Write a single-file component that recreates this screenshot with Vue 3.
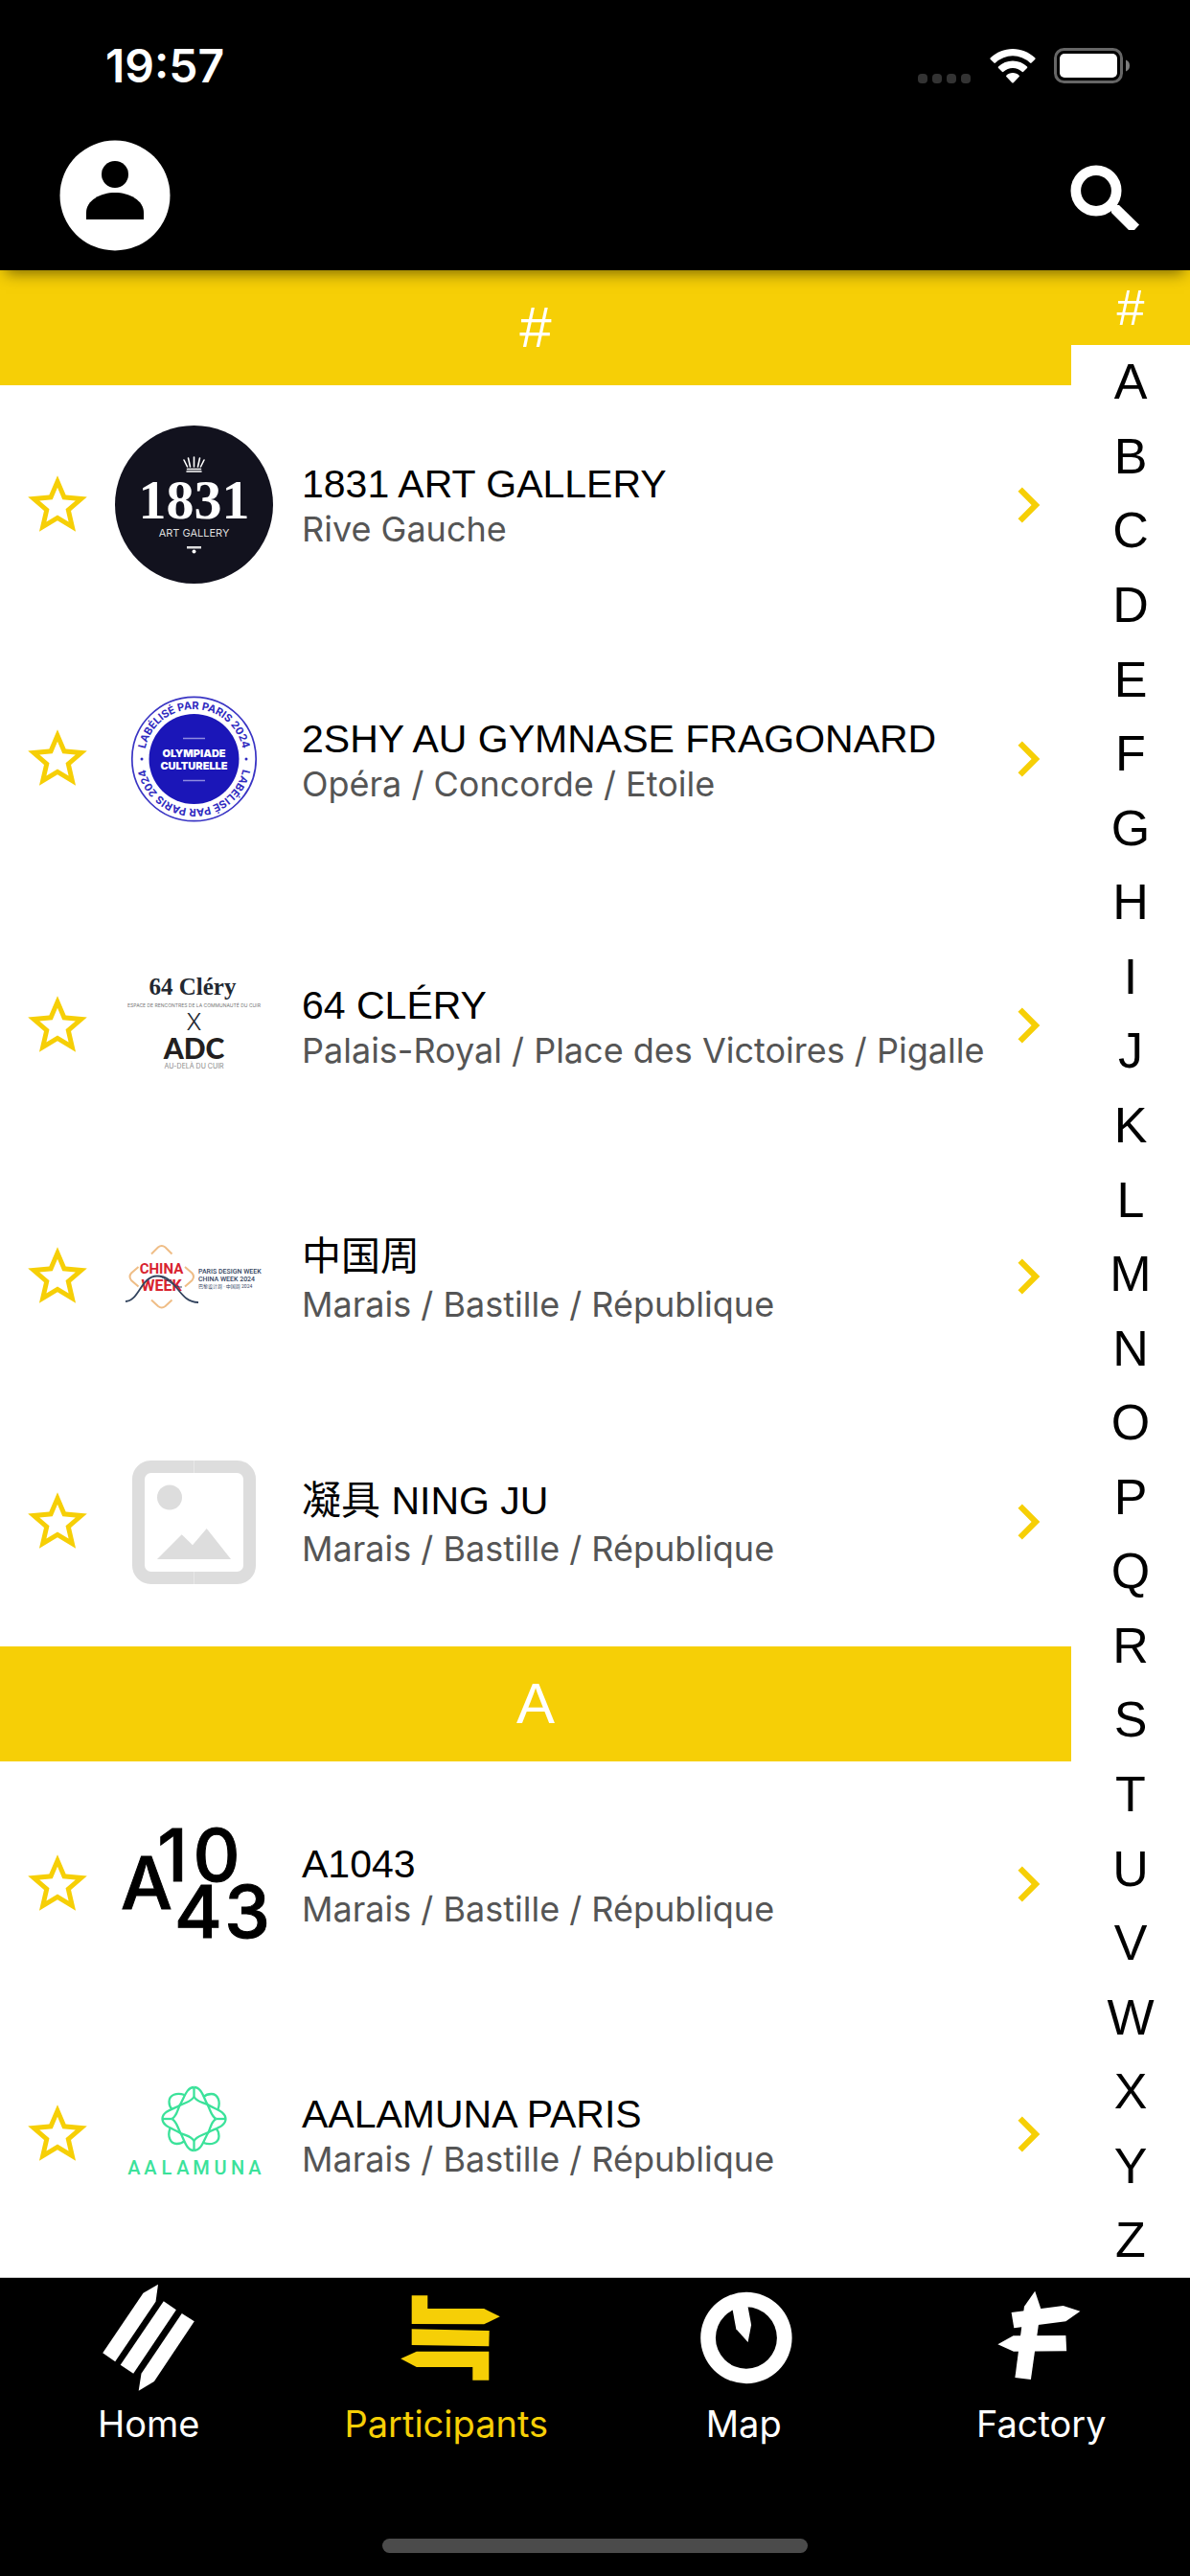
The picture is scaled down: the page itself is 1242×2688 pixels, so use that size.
<template>
  <div class="app">
    <header class="topbar">
      <div class="status">
        <time class="status__time">19:57</time>
        <div class="status__icons">
          <svg class="status__dots" viewBox="0 0 55 10" aria-hidden="true">
            <rect v-for="n in 4" :key="n" :x="(n - 1) * 15" y="0" width="10" height="10" rx="4" fill="#333" />
          </svg>
          <svg class="status__wifi" viewBox="0 0 48 36" aria-hidden="true">
            <path d="M24 0C15 0 7 3.500 .8 9.300Q0 10.200 .8 11L4.400 14.600Q5.200 15.200 6 14.500A26 26 0 0 1 42 14.500Q42.800 15.200 43.600 14.600L47.200 11Q48 10.200 47.200 9.300C41 3.500 33 0 24 0Z" />
            <path d="M24 12.500C18.300 12.500 13 14.700 9 18.500Q8.300 19.300 9 20L12.800 23.800Q13.600 24.500 14.400 23.800A14 14 0 0 1 33.600 23.800Q34.400 24.500 35.200 23.800L39 20Q39.700 19.300 39 18.500C35 14.700 29.700 12.500 24 12.500Z" />
            <path d="M24 25C21.300 25 19 26 17.300 27.700Q16.700 28.400 17.300 29.100L23.200 35.200Q24 36 24.800 35.200L30.700 29.100Q31.300 28.400 30.700 27.700C29 26 26.700 25 24 25Z" />
          </svg>
          <svg class="status__battery" viewBox="0 0 80 37" aria-hidden="true">
            <rect x="1.500" y="1.500" width="69" height="34" rx="9" fill="none" stroke="#666" stroke-width="3" />
            <rect x="6" y="6" width="60" height="25" rx="5" />
            <path d="M75 12.500Q79 14 79 18.500T75 24.500Z" fill="#7c7c7c" />
          </svg>
        </div>
      </div>

      <div class="actions">
        <button class="icon-btn" type="button" aria-label="Profile">
          <svg class="actions__avatar" viewBox="0 0 116 116">
            <circle cx="58" cy="58" r="57.500" fill="#fff" />
            <circle cx="58" cy="36" r="14" fill="#000" />
            <path d="M28 83V76C28 63 43 55 58 55S88 63 88 76V83Z" fill="#000" />
          </svg>
        </button>
        <button class="icon-btn" type="button" aria-label="Search">
          <svg class="actions__search" viewBox="0 0 72 72">
            <circle cx="27" cy="31" r="21.200" fill="none" stroke="#fff" stroke-width="10.600" />
            <path d="M43 54V49L47 46H51L72 66.500 67 72H61Z" fill="#fff" />
          </svg>
        </button>
      </div>
    </header>

    <div class="content">
      <main class="list">
        <section v-for="group in groups" :key="group.letter">
          <h2 class="list__heading">{{ group.letter }}</h2>
          <article v-for="item in group.items" :key="item.name" class="row">
            <button class="icon-btn" type="button" :aria-label="'Favorite ' + item.name">
              <svg class="row__icon" viewBox="0 0 24 24">
                <path d="M22 9.240l-7.190-.62L12 2 9.190 8.630 2 9.240l5.460 4.730L5.820 21 12 17.270 18.180 21l-1.630-7.030L22 9.240zM12 15.400l-3.760 2.270 1-4.280-3.320-2.880 4.380-.38L12 6.100l1.710 4.040 4.380.38-3.320 2.880 1 4.280L12 15.400z" />
              </svg>
            </button>

            <a class="row__link" href="#">
              <!-- 1831 Art Gallery -->
              <svg v-if="item.logo === 'gallery'" class="logo" viewBox="0 0 165 165">
                <circle cx="82.500" cy="82.500" r="82.500" fill="#12121e" />
                <g fill="none" stroke="#fff" stroke-width="1.600" stroke-linecap="round">
                  <path d="M75 48H90M75.500 45.500H89.500M75.500 43L72 36M78.500 43L76.500 34M82.500 43V33M86.500 43L88.500 34M89.500 43L93 36" />
                </g>
                <text class="serif" x="82.500" y="97" font-size="58" font-weight="700" text-anchor="middle" fill="#fff">1831</text>
                <text x="82.500" y="116" font-size="11" text-anchor="middle" fill="#ddd">ART GALLERY</text>
                <rect x="75" y="126" width="15" height="2.500" fill="#ddd" />
                <circle cx="82.500" cy="131.500" r="2" fill="#fff" />
              </svg>

              <!-- Olympiade culturelle -->
              <svg v-else-if="item.logo === 'olympiade'" class="logo" viewBox="0 0 165 198">
                <circle cx="82.500" cy="99" r="64.700" fill="none" stroke="#3a35c4" stroke-width="1.700" />
                <circle cx="82.500" cy="99" r="47" fill="#1b16b8" />
                <path id="ring-top" d="M30.500 99A52 52 0 0 1 134.500 99" fill="none" />
                <path id="ring-bottom" d="M134.500 99A52 52 0 0 1 30.500 99" fill="none" />
                <g font-size="11" font-weight="700" text-anchor="middle" fill="#2f2ac0">
                  <text><textPath href="#ring-top" startOffset="50%">LABÉLISÉ PAR PARIS 2024</textPath></text>
                  <text><textPath href="#ring-bottom" startOffset="50%">LABÉLISÉ PAR PARIS 2024</textPath></text>
                </g>
                <circle cx="28" cy="99" r="1.500" fill="#2f2ac0" />
                <circle cx="137" cy="99" r="1.500" fill="#2f2ac0" />
                <path d="M71 77.500H94M71 121.500H94" stroke="#8f8ce0" stroke-width="1.500" />
                <g font-size="11" font-weight="900" text-anchor="middle" fill="#fff">
                  <text x="82.500" y="97">OLYMPIADE</text>
                  <text x="82.500" y="110">CULTURELLE</text>
                </g>
              </svg>

              <!-- 64 Cléry x ADC -->
              <svg v-else-if="item.logo === 'clery'" class="logo" viewBox="0 0 165 190">
                <g text-anchor="middle" fill="#222831">
                  <text class="serif" x="81" y="63" font-size="25" font-weight="700">64 Cléry</text>
                  <text x="82.500" y="76" font-size="5" fill="#777">ESPACE DE RENCONTRES DE LA COMMUNAUTÉ DU CUIR</text>
                  <text x="82.500" y="100" font-size="24" font-weight="300">X</text>
                  <text class="lato" x="82.500" y="130" font-size="30" font-weight="900" fill="#231f20">ADC</text>
                  <text x="82.500" y="140" font-size="7" fill="#888">AU-DELÀ DU CUIR</text>
                </g>
              </svg>

              <!-- China Week -->
              <svg v-else-if="item.logo === 'china'" class="logo roboto" viewBox="0 0 165 166">
                <g fill="none" stroke="#efbd86" stroke-width="2">
                  <path d="M38 59.500L45 52.500Q48.700 49.500 52.500 52.500L59.500 59.500" />
                  <path d="M38 107.500L45 114Q48.700 117 52.500 114L59.500 107.500" />
                  <path d="M24.500 73L17 79.500Q14 83 17 87L24.500 93.500" />
                  <path d="M73 73L80.500 79.500Q83.500 83 80.500 87L73 93.500" />
                </g>
                <g font-weight="700" text-anchor="middle" fill="#d8232f">
                  <text x="48.500" y="80" font-size="15">CHINA</text>
                  <text x="48.500" y="98" font-size="16">WEEK</text>
                </g>
                <g fill="none" stroke="#34455f" stroke-width="1.800">
                  <path d="M11 109C25 109 27 82.500 44 82.500C65 82.500 66 110 87 110" />
                  <path d="M47 83C57 87 62 95 70 94" stroke-width="1" />
                </g>
                <g fill="#34455f">
                  <text x="87" y="80" font-size="7" font-weight="500">PARIS DESIGN WEEK</text>
                  <text x="87" y="88" font-size="7" font-weight="500">CHINA WEEK 2024</text>
                  <text x="87" y="95" font-size="5">巴黎设计周 · 中国周 2024</text>
                </g>
              </svg>

              <!-- Image placeholder -->
              <svg v-else-if="item.logo === 'placeholder'" class="logo" viewBox="0 0 165 177">
                <rect x="24.500" y="31.500" width="116" height="116" rx="13" fill="none" stroke="#ddd" stroke-width="13" />
                <path d="M82.500 25V38M82.500 141V154" stroke="#e8e8e8" />
                <circle cx="57" cy="63.500" r="13" fill="#ddd" />
                <path d="M44 128L69.700 102.300 81 113.300 95.700 96 121 128Z" fill="#ddd" />
              </svg>

              <!-- A1043 -->
              <svg v-else-if="item.logo === 'a1043'" class="logo" viewBox="0 0 165 172">
                <g font-size="76" font-weight="500" text-anchor="middle" stroke="#000">
                  <text x="33" y="112">A</text>
                  <text x="60 106" y="83">10</text>
                  <text x="87 138" y="142">43</text>
                </g>
              </svg>

              <!-- Aalamuna -->
              <svg v-else class="logo roboto" viewBox="0 0 165 182">
                <g transform="translate(82.500 75)" fill="none" stroke="#3be29a" stroke-width="2.300">
                  <g v-for="angle in [0, 90, 180, 270]" :key="angle" :transform="`rotate(${angle})`">
                    <path d="M0 -33C-8 -33 -10 -22 -15 -14C-18 -7 -18 -3 -23 0" />
                    <path d="M0 -23C-3 -18 -7 -18 -15 -14C-22 -10 -33 -8 -33 0" />
                    <path d="M0 -33V-23" />
                    <path d="M-10 -25C-18 -28 -26 -25 -26 -18C-26 -14 -25 -12 -23 -10" />
                  </g>
                </g>
                <text x="20 37 54 71 90 110 128 146" y="133" font-size="20" font-weight="500" text-anchor="middle" fill="#3be29a">AALAMUNA</text>
              </svg>

              <div class="row__text" :class="{ 'row__text--cjk': item.cjk }">
                <h3 class="row__name">{{ item.name }}</h3>
                <p class="row__area">{{ item.area }}</p>
              </div>

              <svg class="row__icon" viewBox="0 0 24 24" aria-hidden="true">
                <path d="M10 6L8.590 7.410 13.170 12l-4.580 4.590L10 18l6-6z" />
              </svg>
            </a>
          </article>
        </section>
      </main>

      <nav class="index" aria-label="Alphabet">
        <button
          v-for="letter in letters"
          :key="letter"
          class="index__letter"
          :class="{ 'index__letter--active': letter === activeLetter }"
          type="button"
          @click="activeLetter = letter"
        >{{ letter }}</button>
      </nav>
    </div>

    <footer class="tabbar">
      <nav class="tabbar__tabs">
        <a
          v-for="tab in tabs"
          :key="tab.label"
          class="tab"
          :class="{ 'tab--active': tab.label === activeTab }"
          href="#"
          @click.prevent="activeTab = tab.label"
        >
          <svg class="tab__icon" viewBox="0 0 120 120" aria-hidden="true">
            <path v-for="d in tab.paths" :key="d" :d="d" fill-rule="evenodd" />
          </svg>
          <span>{{ tab.label }}</span>
        </a>
      </nav>
      <div class="tabbar__handle" />
    </footer>
  </div>
</template>

<script setup>
import { ref } from 'vue';

const letters = '#ABCDEFGHIJKLMNOPQRSTUVWXYZ'.split('');
const activeLetter = ref('#');
const activeTab = ref('Participants');

const groups = [
  {
    letter: '#',
    items: [
      { name: '1831 ART GALLERY', area: 'Rive Gauche', logo: 'gallery' },
      { name: '2SHY AU GYMNASE FRAGONARD', area: 'Opéra / Concorde / Etoile', logo: 'olympiade' },
      { name: '64 CLÉRY', area: 'Palais-Royal / Place des Victoires / Pigalle', logo: 'clery' },
      { name: '中国周', area: 'Marais / Bastille / République', logo: 'china', cjk: true },
      { name: '凝具 NING JU', area: 'Marais / Bastille / République', logo: 'placeholder', cjk: true },
    ],
  },
  {
    letter: 'A',
    items: [
      { name: 'A1043', area: 'Marais / Bastille / République', logo: 'a1043' },
      { name: 'AALAMUNA PARIS', area: 'Marais / Bastille / République', logo: 'aalamuna' },
    ],
  },
];

const tabs = [
  {
    label: 'Home',
    paths: [
      'M70 4.700L54.500 13.700 12.200 76.300 25.200 85.300 67.500 22.700Z',
      'M75.800 22.300L88.900 31.300 44.200 97.700 30.700 88.700Z',
      'M94.800 35L107.800 43.300 65.900 106 49.700 115.700 52.500 97.700Z',
    ],
  },
  {
    label: 'Participants',
    paths: [
      'M23.700 16.300H40.300V30H99.200L115.800 38.300 99.200 46.300 23.700 46Z',
      'M23.700 51.300L104.700 53 104.300 69.300 23.700 68Z',
      'M12.200 82.300L28.800 74.700H104.300V104.700H87.300V91H28.800Z',
    ],
  },
  {
    label: 'Map',
    paths: [
      'M15.200 60.500a47.700 47.700 0 1 0 95.400 0a47.700 47.700 0 1 0 -95.400 0ZM30.900 60.500a32 32.300 0 1 0 64 0a32 32.300 0 1 0 -64 0Z',
      'M48 28L64.200 26 68.100 47 64.600 65 52.300 51.300Z',
    ],
  },
  {
    label: 'Factory',
    paths: [
      'M53.200 11.700L59.300 30 48.900 104 32.400 102 42 27.700Z',
      'M28.600 34L82.700 27 100.400 32.700 85.400 43.300 31.300 50.300Z',
      'M14.400 67.300L30.500 58.300 85.400 58 86.200 74.300 30.900 74.700Z',
    ],
  },
];
</script>

<style>
body {
  margin: 0;
  background: #fff;
}
</style>

<style scoped>
.app {
  display: flex;
  flex-direction: column;
  height: 100vh;
  font-family: Inter, "Noto Sans CJK SC", sans-serif;
  color: #000;
}

.icon-btn {
  display: flex;
  padding: 0;
  border: none;
  background: none;
  cursor: pointer;
}

/* Header */
.topbar {
  position: relative;
  z-index: 1;
  flex: none;
  background: #000;
  color: #fff;
  box-shadow: 0 9px 15px -6px rgba(0, 0, 0, 0.5);
}

.status {
  display: flex;
  justify-content: space-between;
  align-items: center;
  height: 136px;
  padding: 0 62px 0 110px;
}

.status__time {
  font-size: 48px;
  font-weight: 600;
}

.status__icons {
  display: flex;
  align-items: flex-end;
  fill: #fff;
}

.status__dots {
  width: 55px;
  margin-right: 20px;
}

.status__wifi {
  width: 48px;
  margin-right: 19px;
}

.status__battery {
  width: 80px;
}

.actions {
  display: flex;
  justify-content: space-between;
  align-items: center;
  padding: 10px 53px 20px 62px;
}

.actions__avatar {
  width: 116px;
}

.actions__search {
  width: 72px;
}

/* Participants */
.content {
  display: flex;
  flex: 1;
  min-height: 0;
}

.list {
  flex: 1;
  min-width: 0;
  overflow: hidden;
}

.list__heading {
  margin: 0;
  background: #f6cf06;
  color: #fff;
  font-family: "Liberation Sans", sans-serif;
  font-size: 60px;
  font-weight: 400;
  line-height: 120px;
  text-align: center;
}

.row {
  display: flex;
  align-items: center;
  gap: 23px;
  padding: 42px 8px 42px 23px;
}

.row__icon {
  flex: none;
  width: 74px;
  fill: #f6cf06;
}

.row__link {
  display: flex;
  flex: 1;
  align-items: center;
  min-width: 0;
  color: inherit;
  text-decoration: none;
}

.logo {
  flex: none;
  width: 165px;
  margin-right: 30px;
}

.serif {
  font-family: "Liberation Serif", serif;
}

.lato {
  font-family: Lato, sans-serif;
}

.roboto {
  font-family: Roboto, "Noto Sans CJK SC", sans-serif;
}

.row__text {
  flex: 1;
  min-width: 0;
  padding-top: 3px;
  white-space: nowrap;
}

.row__name {
  margin: 0;
  font-family: "Liberation Sans", "Noto Sans CJK SC", sans-serif;
  font-size: 41px;
  font-weight: 400;
  line-height: 48px;
}

.row__text--cjk .row__name {
  line-height: 54px;
}

.row__area {
  margin: 0;
  color: #555;
  font-size: 36px;
  line-height: 46px;
}

/* Alphabet index */
.index {
  display: flex;
  flex: none;
  flex-direction: column;
  width: 124px;
}

.index__letter {
  flex: 1;
  min-height: 0;
  padding: 0;
  border: none;
  background: none;
  color: #000;
  font-family: "Liberation Sans", sans-serif;
  font-size: 52px;
  line-height: 60px;
  cursor: pointer;
}

.index__letter--active {
  background: #f6cf06;
  color: #fff;
}

/* Bottom tabs */
.tabbar {
  flex: none;
  border-top: 1px solid #ccc;
  background: #000;
}

.tabbar__tabs {
  display: flex;
  padding-top: 2px;
}

.tab {
  display: flex;
  flex: 1;
  flex-direction: column;
  align-items: center;
  gap: 7px;
  color: #fff;
  font-size: 38px;
  line-height: 46px;
  text-decoration: none;
}

.tab--active {
  color: #f6cf06;
}

.tab__icon {
  width: 120px;
  fill: currentColor;
}

.tabbar__handle {
  width: 444px;
  height: 15px;
  margin: 97px auto 24px;
  border-radius: 8px;
  background: #4b4b4b;
}
</style>
